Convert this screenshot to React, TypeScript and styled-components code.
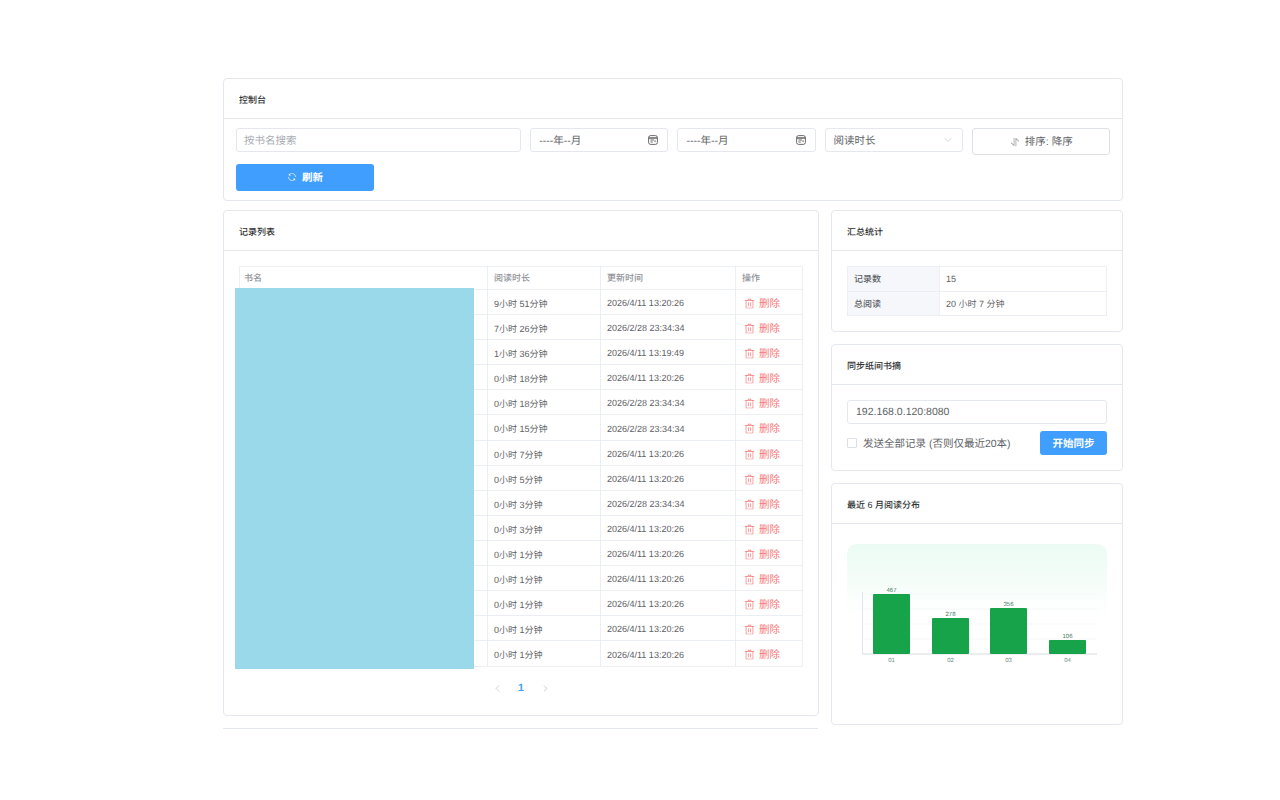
import styled, { createGlobalStyle } from "styled-components";
import { ChevronDown, ChevronLeft, ChevronRight } from "lucide-react";

const records = [
  ["9小时 51分钟", "2026/4/11 13:20:26"],
  ["7小时 26分钟", "2026/2/28 23:34:34"],
  ["1小时 36分钟", "2026/4/11 13:19:49"],
  ["0小时 18分钟", "2026/4/11 13:20:26"],
  ["0小时 18分钟", "2026/2/28 23:34:34"],
  ["0小时 15分钟", "2026/2/28 23:34:34"],
  ["0小时 7分钟", "2026/4/11 13:20:26"],
  ["0小时 5分钟", "2026/4/11 13:20:26"],
  ["0小时 3分钟", "2026/2/28 23:34:34"],
  ["0小时 3分钟", "2026/4/11 13:20:26"],
  ["0小时 1分钟", "2026/4/11 13:20:26"],
  ["0小时 1分钟", "2026/4/11 13:20:26"],
  ["0小时 1分钟", "2026/4/11 13:20:26"],
  ["0小时 1分钟", "2026/4/11 13:20:26"],
  ["0小时 1分钟", "2026/4/11 13:20:26"],
];

const bars = [
  { label: "01", value: 467, x: 26, y: 50, h: 60 },
  { label: "02", value: 278, x: 85, y: 74, h: 36 },
  { label: "03", value: 356, x: 143, y: 64, h: 46 },
  { label: "04", value: 106, x: 202, y: 96, h: 14 },
];

const TrashIcon = () => (
  <svg width="11" height="11" viewBox="0 0 1024 1024" fill="currentColor">
    <path d="M160 256H96a32 32 0 0 1 0-64h256V95.936a32 32 0 0 1 32-32h256a32 32 0 0 1 32 32V192h256a32 32 0 1 1 0 64h-64v672a32 32 0 0 1-32 32H192a32 32 0 0 1-32-32zm448-64v-64H416v64zM224 896h576V256H224zm192-128a32 32 0 0 1-32-32V416a32 32 0 0 1 64 0v320a32 32 0 0 1-32 32m192 0a32 32 0 0 1-32-32V416a32 32 0 0 1 64 0v320a32 32 0 0 1-32 32" />
  </svg>
);

const RefreshIcon = () => (
  <svg width="10" height="10" viewBox="0 0 1024 1024" fill="currentColor">
    <path d="M771.776 794.88A384 384 0 0 1 128 512h64a320 320 0 0 0 555.712 216.448H654.72a32 32 0 1 1 0-64h149.056a32 32 0 0 1 32 32v148.928a32 32 0 1 1-64 0v-50.56zM276.288 295.616h92.992a32 32 0 0 1 0 64H220.16a32 32 0 0 1-32-32V178.56a32 32 0 0 1 64 0v50.56A384 384 0 0 1 896.128 512h-64a320 320 0 0 0-555.776-216.384z" />
  </svg>
);

const SortIcon = () => (
  <SortSvg width="10" height="10" viewBox="0 0 1024 1024" fill="currentColor">
    <path d="M384 96a32 32 0 0 1 64 0v786.752a32 32 0 0 1-54.592 22.656L95.936 608a32 32 0 0 1 0-45.312h.128a32 32 0 0 1 45.184 0L384 805.632zm192 45.248a32 32 0 0 1 54.592-22.592L928.064 416a32 32 0 0 1 0 45.312h-.128a32 32 0 0 1-45.184 0L640 218.496V928a32 32 0 1 1-64 0z" />
  </SortSvg>
);

const CalendarIcon = () => (
  <CalendarSvg width="10" height="10" viewBox="0 0 10 10" fill="none" stroke="#5a5a5a" strokeWidth="0.9">
    <rect x="0.6" y="0.6" width="8.8" height="8.8" rx="2" />
    <path d="M0.6 3h8.8" strokeWidth="1.4" />
    <path d="M2.4 5h3.6M2.4 7h2.4M7 5.2v2" />
  </CalendarSvg>
);

const App = () => {
  return (
    <>
      <GlobalStyle />
      <Page>
        <Card>
          <CardHeader>控制台</CardHeader>
          <FilterGrid>
            <SearchField>按书名搜索</SearchField>
            <Field>
              ----年--月
              <CalendarIcon />
            </Field>
            <Field>
              ----年--月
              <CalendarIcon />
            </Field>
            <Field>
              阅读时长
              <ChevronDown size={12} strokeWidth={1.2} color="#b4b8c0" />
            </Field>
            <PlainButton>
              <SortIcon />
              排序: 降序
            </PlainButton>
            <RefreshButton>
              <RefreshIcon />
              刷新
            </RefreshButton>
          </FilterGrid>
        </Card>

        <Columns>
          <LeftColumn>
            <ListCard>
              <CardHeader>记录列表</CardHeader>
              <ListBody>
                <TableWrap>
                  <RecordTable>
                    <colgroup>
                      <col width={248} />
                      <col width={113} />
                      <col width={135} />
                      <col width={67} />
                    </colgroup>
                    <thead>
                      <tr>
                        <HeadCell>书名</HeadCell>
                        <HeadCell>阅读时长</HeadCell>
                        <HeadCell>更新时间</HeadCell>
                        <HeadCell>操作</HeadCell>
                      </tr>
                    </thead>
                    <tbody>
                      {records.map((row, i) => (
                        <BodyRow key={i} $tall={i === 5 || i === 14}>
                          <BodyCell />
                          <BodyCell>{row[0]}</BodyCell>
                          <BodyCell>{row[1]}</BodyCell>
                          <BodyCell>
                            <DeleteLink>
                              <TrashIcon />
                              删除
                            </DeleteLink>
                          </BodyCell>
                        </BodyRow>
                      ))}
                    </tbody>
                  </RecordTable>
                  <TitleMask />
                </TableWrap>
                <Pagination>
                  <PagerArrow>
                    <ChevronLeft size={11} strokeWidth={1.2} />
                  </PagerArrow>
                  <PagerNumber>1</PagerNumber>
                  <PagerArrow>
                    <ChevronRight size={11} strokeWidth={1.2} />
                  </PagerArrow>
                </Pagination>
              </ListBody>
            </ListCard>
            <EmptyCard />
          </LeftColumn>

          <RightColumn>
            <Card>
              <CardHeader>汇总统计</CardHeader>
              <SideBody>
                <StatsTable>
                  <StatRow>
                    <StatLabel>记录数</StatLabel>
                    <StatValue>15</StatValue>
                  </StatRow>
                  <StatRow>
                    <StatLabel>总阅读</StatLabel>
                    <StatValue>20 小时 7 分钟</StatValue>
                  </StatRow>
                </StatsTable>
              </SideBody>
            </Card>

            <Card>
              <CardHeader>同步纸间书摘</CardHeader>
              <SyncBody>
                <AddressField>192.168.0.120:8080</AddressField>
                <SyncRow>
                  <CheckLabel>
                    <CheckBox />
                    发送全部记录 (否则仅最近20本)
                  </CheckLabel>
                  <SyncButton>开始同步</SyncButton>
                </SyncRow>
              </SyncBody>
            </Card>

            <ChartCard>
              <CardHeader>最近 6 月阅读分布</CardHeader>
              <ChartBody>
                <ChartGlow />
                <ChartSvg viewBox="0 0 260 130">
                  {[50, 65, 80, 95].map((y) => (
                    <line key={y} x1="15" x2="250" y1={y} y2={y} stroke="#f6f7f9" />
                  ))}
                  <line x1="15.5" x2="15.5" y1="48" y2="110" stroke="#e2e4ea" />
                  <line x1="15" x2="250" y1="110" y2="110" stroke="#d9dbe2" />
                  {bars.map((b) => (
                    <g key={b.label}>
                      <rect x={b.x} y={b.y} width="37" height={b.h} rx="1" fill="#16a34a" />
                      <text x={b.x + 18.5} y={b.y - 2} textAnchor="middle" fontSize="6" fill="#3f7a5c">
                        {b.value}
                      </text>
                      <text x={b.x + 18.5} y="118" textAnchor="middle" fontSize="6" fill="#6f8a80">
                        {b.label}
                      </text>
                    </g>
                  ))}
                </ChartSvg>
              </ChartBody>
            </ChartCard>
          </RightColumn>
        </Columns>
      </Page>
    </>
  );
};

const GlobalStyle = createGlobalStyle`
  * {
    box-sizing: border-box;
  }
  body {
    margin: 0;
    background: #fff;
    font-family: "Liberation Sans", "Noto Sans CJK SC", sans-serif;
    color: #606266;
    text-rendering: geometricPrecision;
  }
`;

const Page = styled.div`
  width: 900px;
  margin: 78px 0 0 223px;
`;

const Card = styled.div`
  border: 1px solid #e4e7ed;
  border-radius: 4px;
  background: #fff;
`;

const CardHeader = styled.div`
  height: 40px;
  padding: 2px 15px 0;
  display: flex;
  align-items: center;
  border-bottom: 1px solid #e4e7ed;
  font-size: 9px;
  font-weight: 500;
  color: #303133;
`;

const FilterGrid = styled.div`
  display: grid;
  grid-template-columns: repeat(6, 1fr);
  gap: 9px 9.1px;
  padding: 9px 12.2px 9px 12px;
  align-items: start;
`;

const Field = styled.div`
  height: 24px;
  padding: 0 8px;
  display: flex;
  align-items: center;
  justify-content: space-between;
  border: 1px solid #e4e7ed;
  border-radius: 3px;
  font-size: 10.5px;
  color: #606266;
`;

const SearchField = styled(Field)`
  grid-column: span 2;
  padding-left: 7px;
  color: #a8abb2;
`;

const CalendarSvg = styled.svg`
  margin-right: 1px;
`;

const PlainButton = styled.div`
  height: 27px;
  display: flex;
  align-items: center;
  justify-content: center;
  gap: 5px;
  border: 1px solid #dcdfe6;
  border-radius: 3px;
  font-size: 10.5px;
  color: #606266;
`;

const SortSvg = styled.svg`
  margin-left: 1px;
  opacity: 0.75;
`;

const RefreshButton = styled.div`
  height: 27px;
  padding-bottom: 1px;
  display: flex;
  align-items: center;
  justify-content: center;
  gap: 5px;
  border-radius: 3px;
  background: #409eff;
  color: #fff;
  font-size: 10.5px;
  font-weight: 700;
`;

const Columns = styled.div`
  display: flex;
  justify-content: space-between;
  margin-top: 9px;
`;

const LeftColumn = styled.div`
  width: 596px;
  display: flex;
  flex-direction: column;
  gap: 12px;
`;

const RightColumn = styled.div`
  width: 292px;
  display: flex;
  flex-direction: column;
  gap: 12px;
`;

const ListCard = styled(Card)`
  height: 506px;
`;

const EmptyCard = styled.div`
  height: 1px;
  width: 595px;
  background: #e4e7ed;
`;

const ListBody = styled.div`
  padding: 15px 15px 0;
`;

const TableWrap = styled.div`
  position: relative;
`;

const RecordTable = styled.table`
  width: 563px;
  table-layout: fixed;
  border-collapse: collapse;
  font-size: 9px;
`;

const HeadCell = styled.th`
  height: 23px;
  padding: 0 6px 1px;
  border: 1px solid #ebeef5;
  text-align: left;
  font-weight: 500;
  color: #909399;

  &:first-child {
    padding-left: 4px;
  }
`;

const BodyRow = styled.tr<{ $tall: boolean }>`
  height: ${(p) => (p.$tall ? "26px" : "25px")};
`;

const BodyCell = styled.td`
  padding: 2px 6px 0;
  border: 1px solid #ebeef5;
  color: #606266;
`;

const DeleteLink = styled.span`
  display: flex;
  align-items: center;
  gap: 4px;
  margin-left: 2px;
  font-size: 10.5px;
  color: #f56c6c;
  opacity: 0.9;
`;

const TitleMask = styled.div`
  position: absolute;
  left: -4px;
  top: 22px;
  width: 239px;
  height: 381px;
  background: #9ad9ea;
`;

const Pagination = styled.div`
  display: flex;
  justify-content: center;
  align-items: center;
  gap: 12px;
  margin-top: 15px;
`;

const PagerArrow = styled.span`
  width: 12px;
  display: flex;
  justify-content: center;
  color: #a8abb2;
`;

const PagerNumber = styled.span`
  width: 12px;
  text-align: center;
  font-size: 10.5px;
  font-weight: 700;
  color: #409eff;
`;

const SideBody = styled.div`
  padding: 15px;
`;

const StatsTable = styled.div`
  border: 1px solid #ebeef5;
  border-bottom: 0;
  font-size: 9px;
`;

const StatRow = styled.div`
  display: grid;
  grid-template-columns: 92px 1fr;
  height: 24.5px;
  border-bottom: 1px solid #ebeef5;
`;

const StatLabel = styled.div`
  display: flex;
  align-items: center;
  padding: 0 6px;
  background: #f5f7fa;
  border-right: 1px solid #ebeef5;
  font-weight: 500;
  color: #606266;
`;

const StatValue = styled.div`
  display: flex;
  align-items: center;
  padding: 0 6px;
  color: #606266;
`;

const SyncBody = styled.div`
  padding: 15px;
`;

const AddressField = styled(Field)`
  height: 24px;
  font-size: 10.5px;
`;

const SyncRow = styled.div`
  display: flex;
  justify-content: space-between;
  align-items: center;
  margin-top: 7px;
`;

const CheckLabel = styled.div`
  display: flex;
  align-items: center;
  gap: 6px;
  font-size: 10.5px;
  color: #606266;
`;

const CheckBox = styled.span`
  width: 10px;
  height: 10px;
  border: 1px solid #dcdfe6;
  border-radius: 1px;
`;

const SyncButton = styled.div`
  width: 67px;
  height: 24px;
  display: flex;
  align-items: center;
  justify-content: center;
  border-radius: 3px;
  background: #409eff;
  color: #fff;
  font-size: 10.5px;
  font-weight: 700;
`;

const ChartCard = styled(Card)`
  height: 242px;
`;

const ChartBody = styled.div`
  position: relative;
  padding: 20px 15px 0;
`;

const ChartGlow = styled.div`
  height: 72px;
  border-radius: 10px 10px 0 0;
  background: linear-gradient(180deg, #ebfbf3 0%, #ffffff 100%);
`;

const ChartSvg = styled.svg`
  position: absolute;
  left: 15px;
  top: 20px;
  width: 260px;
  height: 130px;
`;

export default App;
